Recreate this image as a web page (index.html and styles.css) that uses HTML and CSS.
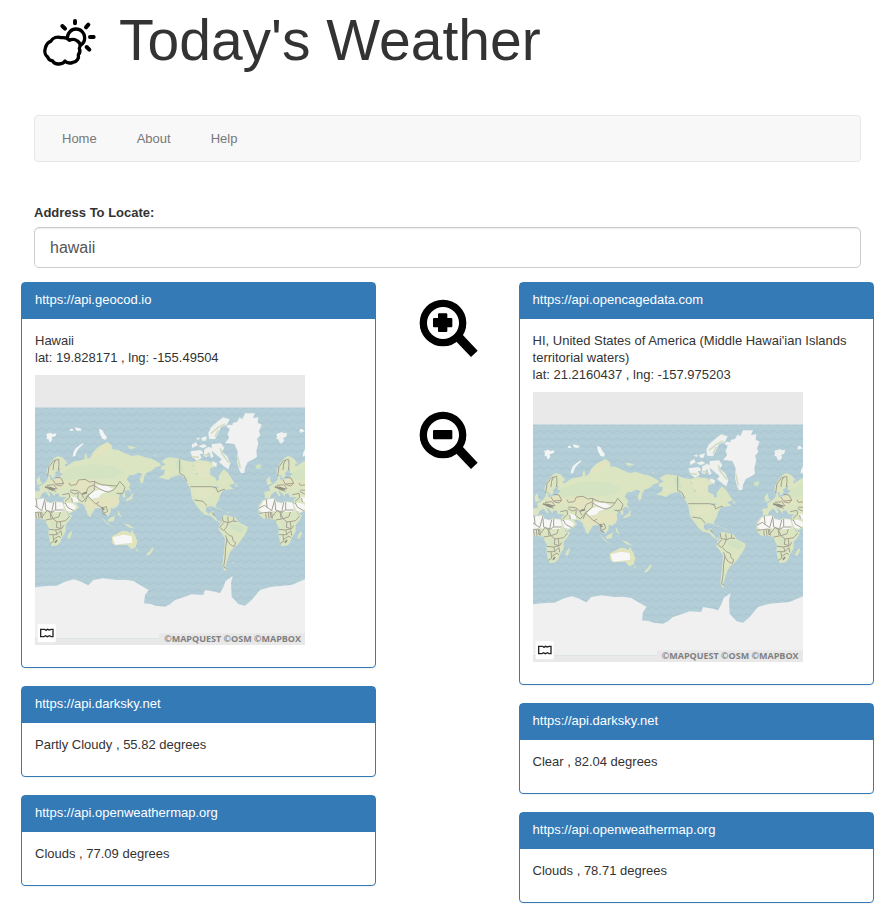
FILE: index.html
```html
<!DOCTYPE html>
<html lang="en">
<head>
<meta charset="utf-8">
<meta name="viewport" content="width=device-width, initial-scale=1">
<title>Today's Weather</title>
<link rel="stylesheet" href="styles.css">
</head>
<body>
<svg class="defs" aria-hidden="true">
  <defs>
    <pattern id="waves" width="26" height="22" patternUnits="userSpaceOnUse">
      <path d="M0 9Q7 15 13 9T26 9" fill="none" stroke="#adc8d3" stroke-width="5"/>
    </pattern>
    <g id="old-world">
      <path fill="#dbe5c2" d="M0 235L-2 215 15 213 12 200 28 190 38 178 40 168 46 170 46 180 60 182 72 176 78 166 90 161 74 159 76 148 70 140 68 152 60 158 62 166 54 176 47 165 39 167 34 160 36 148 46 128 58 114 70 108 84 113 92 122 98 130 90 132 92 140 104 132 118 124 130 122 148 118 150 104 154 100 158 118 168 110 175 95 190 80 205 72 218 66 230 75 232 88 250 90 270 100 290 108 310 105 330 112 350 116 375 130 378 138 362 142 350 152 335 158 328 168 325 185 318 192 314 178 322 162 310 158 296 165 284 165 275 178 286 192 280 208 268 215 272 230 264 234 262 222 250 222 256 228 250 232 254 246 248 258 236 266 228 264 226 278 218 290 208 278 202 268 192 255 186 258 178 270 170 282 166 292 158 285 152 262 142 252 130 248 118 246 125 252 132 262 120 272 100 282 92 262 85 240 95 232 75 231 70 220 60 222 58 230 50 218 38 210 47 226 42 230 32 214 20 222 14 235Z"/>
      <path fill="#dbe5c2" d="M-20 270L-18 255-6 240 10 236 30 234 32 244 48 248 60 244 82 246 90 262 98 284 112 286 104 300 92 315 92 335 82 350 76 366 68 376 50 379 44 362 40 340 42 325 34 310 32 300 12 296-6 296-18 284Z"/>
      <path fill="#dbe5c2" d="M4 180l10-12 2 14 6 8-14 6zM101 342l8-10 2 8-8 18-6-4zM197 290l14 12 16 16 16 4-24-8zM218 300l10-8 12-4-4 16-14 2zM265 310l18 4 16 12-18-4zM248 270l6 10 6 14-10-8zM270 240l14-8 10-14-2 18-16 8zM276 196l10 12 4 8-14-10zM278 77l14 2 12 4-20 5zM355 106l10 1-4 3zM334 402l10-8 8-13 4 6-10 16-10 4zM302 388l8 1-4 6z"/>
      <path fill="#e3e4bf" d="M50 180L76 172 102 184 94 200 60 208 44 196zM104 192L130 178 180 184 210 196 176 202 150 222 128 212zM180 236L216 228 252 232 246 256 206 262 150 270 154 242zM178 100L210 72 228 78 214 92 178 116zM36 300L80 298 90 304 52 306z"/>
      <path fill="#d4e3c2" d="M82 158L112 144 168 132 234 138 268 156 236 174 172 178 132 174 80 184zM46 306L66 300 70 320 52 324z"/>
      <path fill="#e0e4bd" d="M232 370L230 350 240 344 262 332 278 334 286 340 290 330 300 345 307 364 302 382 290 388 276 374 242 376z"/>
      <path fill="#f6f7f6" d="M233 352L264 344 290 348 292 368 240 374zM160 228L178 214 202 207 224 214 198 222 192 232 170 236zM182 196L216 198 236 208 218 214 186 206zM-18 268L-4 242 10 238 30 236 34 246 50 250 62 246 82 248 86 262 82 275 46 277 22 273-4 282zM86 252L104 248 118 254 124 263 108 275 94 272zM108 230L130 234 128 248 110 244z"/>
      <path fill="#f3f5f5" d="M34 42l12-4 6 4 12-2-2 8-12 4 2 8-8 8-4-12-6 2 2-8zM104 28l8-2 4 6-10 1zM120 22l10 2 8 2-6 8-10-4zM132 28l8 0-2 6zM192 26l10 4 6 12 8 10-4 7-10-3-8-16zM113 110Q114 82 146 69L144 74Q124 88 121 107z"/>
      <g fill="none" stroke="#a5a292" stroke-width="3" stroke-linejoin="round">
        <path d="M38 168L42 140 56 122 71 118 72 134 70 150M54 150L56 132 62 120M102 188L106 196 124 194 130 180 150 178 164 186 180 184 178 194 160 202 154 216 140 222 128 212 106 210M180 186L200 194 218 196 246 198 254 184 270 202 264 220 244 220M180 198L192 206 210 214 222 216 238 208 246 198M178 194L178 210 158 228 150 246M158 228L182 252 192 246M184 252L202 264 214 260 218 274 206 280M202 264l2 18 10 4M62 172L78 174 86 190 62 192M54 180l8 14 16 4 8-8M36 196l20-2 10 12-20 2zM40 206l22 8M82 224L102 220 104 232 90 244M104 214l14 8 12-4"/>
        <path d="M-18 265L-2 256 20 272 30 236M4 238l2 24M30 244l2 26 18 6 6-28M62 246l0 24 22 0M62 270l-16 10M-18 280l34-4 2 18 18-22 10 6 2 18M46 278L54 296 72 290 76 276M32 300L54 296 66 306 92 302 104 288M66 306l-2 16 14 4-2-20M42 328l20 2 4 14-24 0M62 330l18-4 6-10M66 342l12-10 2 14M54 344l2 20-10 6M56 358l16-10 6 6M2 280l2 16M10 278l2 18M20 276l2 20"/>
        <path d="M90 248l8 14 18 10M110 234l2 12M130 218l-2 18 14 10 10-12 10-12M140 222l6 12"/>
      </g>
      <path fill="none" stroke="#939084" stroke-width="5" d="M30 200l24 10M42 202l18 6M142 222l14-4M66 360l-6 8M200 262l8 8"/>
    </g>
    <g id="americas">
      <path fill="#dbe5c2" d="M-20 172L-4 164 0 150-14 148-10 138 2 134-10 124 0 116 14 112 44 116 66 124 84 126 104 120 130 124 142 130 150 124 146 142 136 150 136 164 150 172 156 184 162 178 160 168 168 158 176 148 190 160 204 182 210 190 192 196 206 206 196 208 180 210 172 214 166 224 162 238 158 246 152 256 156 268 150 262 138 258 124 262 122 274 132 282 140 274 146 274 142 286 152 292 158 302 168 304 164 308 150 300 138 288 120 284 106 272 94 256 88 248 80 234 76 206 68 192 60 178 50 166 38 166 20 172 10 180z"/>
      <path fill="#dbe5c2" d="M170 292L178 284 192 288 212 292 220 306 248 320 246 332 238 346 230 358 222 370 214 378 202 388 194 400 188 416 184 430 180 444 186 450 178 452 172 438 174 416 178 384 180 356 170 340 160 328 162 316 170 306z"/>
      <path fill="#e2e5c4" d="M84 130l40-4 14 20-12 14 12 20-36-8zM90 210l44-8 14 14-28 18-28-4zM186 368l16-4 12 14-20 8-6 16zM0 154l24 6-16 8z"/>
      <path fill="#d1e2c4" d="M190 308l30 4 22 12-14 16-28-14zM30 120l16 2 12 34-20-8z"/>
      <path fill="#cfe2c2" d="M154 264l14 4 14 6-22-6zM182 274l12 2-6 4zM270 138l12-6 8 4-4 10-10 1zM200 428l8-2-2 4zM212 188l6 10-8 2zM0 176l-12 8z"/>
      <path fill="#f0f1f0" d="M180 70L192 54 188 42 194 26 184 20 190 14 202 16 204 8 216 6 224-8 232-2 240-20 270-20 264-6 280-8 278 8 290 14 282 34 286 46 276 56 280 70 274 94 276 110 268 116 248 126 240 144 238 158 228 160 222 148 216 124 218 94 208 72 190 70z"/>
      <path fill="#eff1ee" d="M130 38L138 22 156 6 174-8 194-2 186 14 168 22 160 38 150 58 132 56zM108 54l18-6-4 14-10 0zM80 74l14-8 4 10-16 8zM76 94l30-4 8 6-2 6-8 0 6 12-14 8-14-10zM118 88l14-8 16 10-8 6 6 14-8 4-4-16-6 0-2 14-10-4zM140 72l28-2 10 14-8 12 16 12 10 22-6 18-14-10-14-12 8-8-18-16-12-10zM92 56l12-4-2 8zM100 78l18-6 8 8-14 4zM140 124l16 6-2 12-10-6zM338 42l12-6 8 4 8-2-2 12-10 4 4 8-10 10-6-12-6-6zM402 32l12-2 6 4-14 4z"/>
      <path fill="none" stroke="#d3dcc3" stroke-width="5" d="M138 40l22-18 20-10M150 50l10-20M82 110l20 2M118 104l16 2M166 84l4 16 22 28M218 110l8 36"/>
      <path fill="#b4ced7" d="M82 134l6 2-4 4zM92 160l8 0-4 6zM144 198l18 2-8 8zM136 144l14 0 2 8 10 0-2 28-10-8-14-8z"/>
      <path fill="none" stroke="#a5a292" stroke-width="3" stroke-linejoin="round" d="M44 118L44 160 56 166 66 184M76 200L140 200 154 204 158 216 170 210 180 208M88 240L114 244 126 258M140 278l10 8M172 290l2 14 16 4-2-18M176 308l-12 14 12 10 8-10 6-14 16-6M206 292l0 12 10 0M178 332l12 12 12 6 2 12 8 6-4 12-12-6-10-14-4-14M186 356l-4 24-2 34-4 26 8 6"/>
    </g>
    <symbol id="world-map" viewBox="0 0 810 810">
      <rect width="810" height="810" fill="#e9e9e9"/>
      <rect y="98" width="810" height="692" fill="#b4ced7"/>
      <rect y="98" width="810" height="692" fill="url(#waves)"/>
      <use href="#old-world" transform="translate(0 135)"/>
      <use href="#old-world" transform="translate(690 135)"/>
      <use href="#americas" transform="translate(390 135)"/>
      <path fill="#f0f0f0" d="M0 637L35 633 65 632 90 620 116 613 135 619 160 631 175 615 205 610 245 615 270 614 295 618 320 633 341 645 330 660 327 685 350 688 362 692 390 695 405 688 420 675 450 665 470 658 505 660 510 645 540 650 555 655 565 637 572 618 593 603 588 625 590 665 610 687 630 692 650 675 675 645 710 635 770 630 810 613V790H0z"/>
      <rect x="373" y="775" width="437" height="35" fill="#e8e8e8"/>
      <rect x="8" y="748" width="54" height="54" rx="3" fill="#fff"/>
      <path fill="none" stroke="#222" stroke-width="4" d="M17 763H29L33 766 37 763 43 765 48 763H54V785H48L44 782 37 785 31 782 27 785H17z"/>
    </symbol>
  </defs>
</svg>

<div class="page">
  <header class="masthead">
    <svg class="logo" viewBox="0 0 180 180" aria-hidden="true">
      <g fill="none" stroke="#000" stroke-width="10" stroke-linecap="round" stroke-linejoin="round">
        <path d="M41 153C34 152 28 147 26 141C18 136 16 124 19 114C22 103 28 96 35 94C42 82 55 79 67 83C76 82 86 84 91 91C99 87 109 88 115 93C123 98 126 107 121 115C124 122 122 130 118 134C121 145 113 156 102 157C94 160 84 160 78 153C73 163 48 167 41 153z"/>
        <path d="M85 85C84 70 97 57 111 57C126 57 137 69 137 83C137 93 132 101 125 105"/>
        <path stroke-width="12" d="M108 33V40M70 48L78 56M148 44L141 52M153 81H164M143 111L151 119"/>
      </g>
    </svg>
    <h1 class="title">Today's Weather</h1>
  </header>

  <nav class="navbar">
    <a href="#home">Home</a>
    <a href="#about">About</a>
    <a href="#help">Help</a>
  </nav>

  <form class="search">
    <label for="address">Address To Locate:</label>
    <input id="address" type="text" value="hawaii">
  </form>

  <main class="results">
    <div class="column">
      <section class="panel">
        <h2 class="panel-heading">https://api.geocod.io</h2>
        <div class="panel-body">
          <p class="place">Hawaii<br>lat: 19.828171 , lng: -155.49504</p>
          <div class="map">
            <svg viewBox="0 0 810 810" role="img" aria-label="World map"><use href="#world-map"/></svg>
            <span class="credit">©MAPQUEST ©OSM ©MAPBOX</span>
          </div>
        </div>
      </section>
      <section class="panel">
        <h2 class="panel-heading">https://api.darksky.net</h2>
        <div class="panel-body"><p>Partly Cloudy , 55.82 degrees</p></div>
      </section>
      <section class="panel">
        <h2 class="panel-heading">https://api.openweathermap.org</h2>
        <div class="panel-body"><p>Clouds , 77.09 degrees</p></div>
      </section>
    </div>

    <div class="zoom-controls">
      <button type="button" aria-label="Zoom in">
        <svg viewBox="0 0 180 180" aria-hidden="true">
          <circle cx="75" cy="75" r="59" fill="none" stroke="#000" stroke-width="22"/>
          <path d="M111 127L131 107 179 158 159 177zM63 46H85Q88 46 88 49V60H100Q103 60 103 63V85Q103 88 100 88H88V99Q88 102 85 102H63Q60 102 60 99V88H48Q45 88 45 85V63Q45 60 48 60H60V49Q60 46 63 46z"/>
        </svg>
      </button>
      <button type="button" aria-label="Zoom out">
        <svg viewBox="0 0 180 180" aria-hidden="true">
          <circle cx="75" cy="75" r="59" fill="none" stroke="#000" stroke-width="22"/>
          <path d="M111 127L131 107 179 158 159 177z"/>
          <rect x="45" y="60" width="58" height="28" rx="3"/>
        </svg>
      </button>
    </div>

    <div class="column">
      <section class="panel">
        <h2 class="panel-heading">https://api.opencagedata.com</h2>
        <div class="panel-body">
          <p class="place">HI, United States of America (Middle Hawai'ian Islands territorial waters)<br>lat: 21.2160437 , lng: -157.975203</p>
          <div class="map">
            <svg viewBox="0 0 810 810" role="img" aria-label="World map"><use href="#world-map"/></svg>
            <span class="credit">©MAPQUEST ©OSM ©MAPBOX</span>
          </div>
        </div>
      </section>
      <section class="panel">
        <h2 class="panel-heading">https://api.darksky.net</h2>
        <div class="panel-body"><p>Clear , 82.04 degrees</p></div>
      </section>
      <section class="panel">
        <h2 class="panel-heading">https://api.openweathermap.org</h2>
        <div class="panel-body"><p>Clouds , 78.71 degrees</p></div>
      </section>
    </div>
  </main>
</div>
</body>
</html>
```
FILE: styles.css
```css
* {
  box-sizing: border-box;
}

body {
  margin: 0;
  background: #fff;
  color: #333;
  font-family: "Liberation Sans", Arial, sans-serif;
  font-size: 13px;
  line-height: 18px;
}

h1,
h2,
p {
  margin: 0;
}

.defs {
  position: absolute;
  width: 0;
  height: 0;
}

.page {
  padding: 8px 15px 5px 21px;
}

.masthead {
  display: flex;
  align-items: center;
  gap: 20px;
  height: 64px;
  margin: 0 13px 43px 18px;
}

.logo {
  width: 60px;
  height: 60px;
}

.title {
  font-size: 57px;
  font-weight: 400;
  line-height: 64px;
}

.navbar {
  display: flex;
  gap: 40px;
  margin: 0 13px;
  padding: 14px 27px 13px;
  border: 1px solid #e7e7e7;
  border-radius: 4px;
  background: #f8f8f8;
}

.navbar a {
  color: #777;
  text-decoration: none;
}

.search {
  margin: 42px 13px 14px;
}

.search label {
  display: block;
  margin-bottom: 5px;
  font-weight: 700;
}

.search input {
  display: block;
  width: 100%;
  height: 41px;
  padding: 0 15px;
  border: 1px solid #ccc;
  border-radius: 5px;
  background: #fff;
  box-shadow: inset 0 1px 1px rgba(0, 0, 0, 0.075);
  color: #555;
  font: 16px "Liberation Sans", Arial, sans-serif;
}

.results {
  display: grid;
  grid-template-columns: 5fr 2fr 5fr;
  align-items: start;
}

.column {
  display: grid;
  gap: 18px;
}

.panel {
  border: 1px solid #337ab7;
  border-radius: 4px;
  background: #fff;
  box-shadow: 0 1px 1px rgba(0, 0, 0, 0.05);
}

.panel-heading {
  padding: 8px 13px 10px;
  background: #337ab7;
  color: #fff;
  font-size: 13px;
  font-weight: 400;
}

.panel-body {
  padding: 13px 13px 22px;
}

.place {
  margin-bottom: 9px;
  line-height: 17px;
}

.map {
  position: relative;
  width: 270px;
  max-width: 100%;
}

.map svg {
  display: block;
  width: 100%;
}

.credit {
  position: absolute;
  right: 4px;
  bottom: 0;
  color: #808080;
  font: 700 9px/12px "Open Sans", sans-serif;
  white-space: nowrap;
}

.zoom-controls {
  display: flex;
  flex-direction: column;
  align-items: center;
  gap: 52px;
  padding: 16px 0 0 2px;
}

.zoom-controls button {
  width: 60px;
  height: 60px;
  padding: 0;
  border: 0;
  background: none;
  cursor: pointer;
}

.zoom-controls svg {
  display: block;
  width: 60px;
  height: 60px;
}
```
